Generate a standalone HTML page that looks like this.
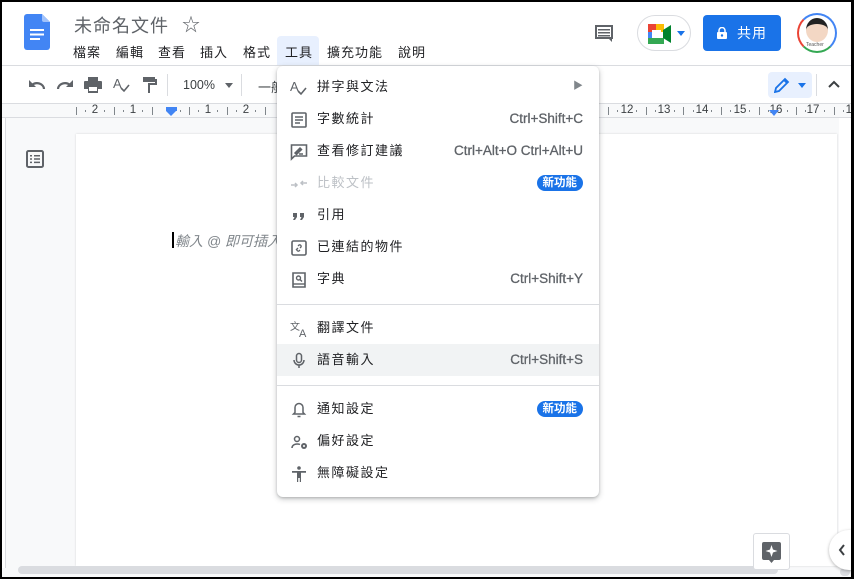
<!DOCTYPE html>
<html><head><meta charset="utf-8"><style>
*{margin:0;padding:0;box-sizing:border-box}
body{width:854px;height:579px;overflow:hidden;background:#fff;font-family:"Liberation Sans","Noto Sans CJK TC",sans-serif;position:relative;color:#3c4043}
.a{position:absolute}
.menu{left:277px;top:66px;width:322px;height:431px;background:#fff;border-radius:6px;box-shadow:0 2px 6px rgba(60,64,67,.3),0 1px 2px rgba(60,64,67,.2)}
.it{position:absolute;left:0;width:322px;height:32px;font-size:13px;line-height:32px;color:#202124}
.it .t{position:absolute;left:40px;letter-spacing:1.5px}
.it .k{position:absolute;right:16px;color:#5f6368;font-size:13.5px;-webkit-text-stroke:.3px #5f6368}
.it svg{position:absolute;left:13px;top:8px}
.badge{position:absolute;right:16px;top:8px;height:16px;line-height:16px;padding:0 6px;border-radius:8px;background:#1a73e8;color:#fff;font-size:11.5px;font-weight:bold}
.sep{position:absolute;left:0;width:322px;height:1px;background:#dadce0}
.mb span{position:absolute;top:42px;font-size:13px;color:#202124;letter-spacing:1px}
.rn{position:absolute;top:104px;font-size:11.5px;color:#3c4043;transform:translateX(-50%)}
.tk{position:absolute;top:107px;width:1px;height:8px;background:#80868b}
.dt{position:absolute;top:110px;width:1px;height:2px;background:#80868b}
</style></head><body>
<svg class="a" style="left:24px;top:14px" width="26" height="36" viewBox="0 0 26 36"><path d="M0 3a3 3 0 0 1 3-3h15l8 8v25a3 3 0 0 1-3 3H3a3 3 0 0 1-3-3z" fill="#4285f4"/><path d="M18 0l8 8h-6a2 2 0 0 1-2-2z" fill="#a1c2fa"/><rect x="6" y="15" width="14" height="2" fill="#fff"/><rect x="6" y="19.5" width="14" height="2" fill="#fff"/><rect x="6" y="24" width="10" height="2" fill="#fff"/></svg>
<div class="a" style="left:74px;top:12px;font-size:18px;color:#5f6368;letter-spacing:1px">未命名文件</div>
<div class="a" style="left:182px;top:11px;font-size:18px;color:#5f6368">☆</div>
<div class="mb"><span style="left:73px">檔案</span><span style="left:116px">編輯</span><span style="left:158px">查看</span><span style="left:200px">插入</span><span style="left:243px">格式</span><span style="left:285px">工具</span><span style="left:327px">擴充功能</span><span style="left:398px">說明</span></div>
<div class="a" style="left:277px;top:36px;width:42px;height:29px;background:#e8f0fe;border-radius:4px 4px 0 0;z-index:-1"></div>
<svg class="a" style="left:594px;top:24px" width="20" height="20" viewBox="0 0 20 20"><path d="M1 1h18v14h-1v3l-3-3H1z" fill="#5f6368"/><path d="M3 3h14v10H3z" fill="#fff"/><path d="M4 5h12v1.5H4zM4 8h12v1.5H4zM4 11h12v1.5H4z" fill="#5f6368"/></svg>
<div class="a" style="left:637px;top:15px;width:54px;height:36px;border:1px solid #dadce0;border-radius:18px"></div>
<svg class="a" style="left:648px;top:24px" width="24" height="20" viewBox="0 0 24 20"><rect x="0" y="0" width="8" height="8" fill="#ea4335"/><rect x="8" y="0" width="8" height="8" fill="#fbbc04"/><rect x="0" y="8" width="4" height="8" fill="#4285f4"/><rect x="0" y="14" width="16" height="6" fill="#34a853"/><rect x="4" y="6" width="9" height="8" fill="#fff"/><path d="M15 6l8-5v18l-8-5z" fill="#00832d"/></svg>
<div class="a" style="left:677px;top:31px;border:4px solid transparent;border-top:5px solid #1a73e8"></div>
<div class="a" style="left:703px;top:15px;width:78px;height:36px;background:#1a73e8;border-radius:4px;color:#fff;font-size:14px;line-height:36px"><svg style="position:absolute;left:14px;top:12px" width="10" height="12" viewBox="0 0 10 12"><path d="M2 5V3.5a3 3 0 0 1 6 0V5" fill="none" stroke="#fff" stroke-width="1.5"/><rect x="0" y="5" width="10" height="7" rx="1" fill="#fff"/><circle cx="5" cy="8.5" r="1.2" fill="#1a73e8"/></svg><span style="position:absolute;left:34px;letter-spacing:1px">共用</span></div>
<div class="a" style="left:797px;top:13px;width:40px;height:40px;border-radius:50%;border:2px solid #4285f4;border-left-color:#ea4335;border-bottom-color:#34a853;background:#fff"></div>
<div class="a" style="left:806px;top:18px;width:22px;height:24px;border-radius:50%;background:#f3d7c4;border-top:6px solid #222"></div>
<div class="a" style="left:806px;top:42px;font-size:5px;color:#555">Teacher</div>
<div class="a" style="left:0;top:65px;width:854px;height:1px;background:#dadce0"></div>
<!-- toolbar -->
<svg class="a" style="left:28px;top:78px" width="18" height="12" viewBox="0 0 18 12"><path d="M16 11a7 6 0 0 0-12-4" fill="none" stroke="#5f6368" stroke-width="2.2"/><path d="M1 2v7h7z" fill="#5f6368"/></svg>
<svg class="a" style="left:56px;top:78px" width="18" height="12" viewBox="0 0 18 12"><path d="M2 11a7 6 0 0 1 12-4" fill="none" stroke="#5f6368" stroke-width="2.2"/><path d="M17 2v7h-7z" fill="#5f6368"/></svg>
<svg class="a" style="left:84px;top:77px" width="18" height="16" viewBox="0 0 18 16"><path d="M4 0h10v4H4zM1 4h16a1 1 0 0 1 1 1v7h-4v4H4v-4H0V5a1 1 0 0 1 1-1z" fill="#5f6368"/><rect x="5" y="10" width="8" height="4" fill="#fff"/></svg>
<svg class="a" style="left:113px;top:76px" width="20" height="18" viewBox="0 0 20 18"><text x="0" y="12" font-size="13" fill="#5f6368" font-family="Liberation Sans">A</text><path d="M8 12l3 3 5-6" fill="none" stroke="#5f6368" stroke-width="1.6"/></svg>
<svg class="a" style="left:143px;top:77px" width="14" height="16" viewBox="0 0 14 16"><path d="M0 0h12v5H0zM12 2h2v6H7v8H5V6h7z" fill="#5f6368"/></svg>
<div class="a" style="left:167px;top:74px;width:1px;height:22px;background:#dadce0"></div>
<div class="a" style="left:183px;top:78px;font-size:12.5px;color:#3c4043">100%</div>
<div class="a" style="left:225px;top:83px;border:4px solid transparent;border-top:5px solid #5f6368"></div>
<div class="a" style="left:241px;top:74px;width:1px;height:22px;background:#dadce0"></div>
<div class="a" style="left:258px;top:77px;font-size:13px;color:#3c4043">一般</div>
<div class="a" style="left:768px;top:72px;width:44px;height:26px;background:#e8f0fe;border-radius:4px"></div>
<svg class="a" style="left:774px;top:77px" width="16" height="16" viewBox="0 0 16 16"><path d="M1 15l1-4 9-9 3 3-9 9zM10 3l3 3" fill="none" stroke="#1a73e8" stroke-width="1.8"/></svg>
<div class="a" style="left:798px;top:83px;border:4px solid transparent;border-top:5px solid #1a73e8"></div>
<div class="a" style="left:816px;top:74px;width:1px;height:22px;background:#dadce0"></div>
<svg class="a" style="left:828px;top:80px" width="12" height="8" viewBox="0 0 12 8"><path d="M1 7l5-5 5 5" fill="none" stroke="#3c4043" stroke-width="2"/></svg>
<!-- ruler -->
<div class="a" style="left:0;top:103px;width:854px;height:15px;background:#f8f9fa;border-top:1px solid #dadce0;border-bottom:1px solid #dadce0"></div>
<span class="rn" style="left:95px">2</span><span class="rn" style="left:133px">1</span><span class="rn" style="left:208px">1</span><span class="rn" style="left:246px">2</span>
<span class="tk" style="left:76px"></span><span class="tk" style="left:114px"></span><span class="tk" style="left:152px"></span><span class="tk" style="left:189px"></span><span class="tk" style="left:227px"></span><span class="tk" style="left:265px"></span>
<span class="dt" style="left:85px"></span><span class="dt" style="left:104px"></span><span class="dt" style="left:123px"></span><span class="dt" style="left:142px"></span><span class="dt" style="left:180px"></span><span class="dt" style="left:198px"></span><span class="dt" style="left:217px"></span><span class="dt" style="left:236px"></span><span class="dt" style="left:255px"></span>
<span class="rn" style="left:627px">12</span><span class="rn" style="left:664px">13</span><span class="rn" style="left:702px">14</span><span class="rn" style="left:740px">15</span><span class="rn" style="left:776px">16</span><span class="rn" style="left:813px">17</span><span class="rn" style="left:852px">18</span>
<span class="tk" style="left:608px"></span><span class="tk" style="left:646px"></span><span class="tk" style="left:683px"></span><span class="tk" style="left:721px"></span><span class="tk" style="left:759px"></span><span class="tk" style="left:796px"></span><span class="tk" style="left:834px"></span>
<span class="dt" style="left:617px"></span><span class="dt" style="left:636px"></span><span class="dt" style="left:655px"></span><span class="dt" style="left:674px"></span><span class="dt" style="left:693px"></span><span class="dt" style="left:711px"></span><span class="dt" style="left:730px"></span><span class="dt" style="left:749px"></span><span class="dt" style="left:768px"></span><span class="dt" style="left:787px"></span><span class="dt" style="left:805px"></span><span class="dt" style="left:824px"></span><span class="dt" style="left:843px"></span>
<div class="a" style="left:166px;top:107px;width:11px;height:4px;background:#4285f4"></div>
<div class="a" style="left:166px;top:111px;border:5.5px solid transparent;border-top:5px solid #4285f4;border-bottom:0"></div>
<div class="a" style="left:769px;top:110px;border:5px solid transparent;border-top:6px solid #4285f4;border-bottom:0"></div>
<!-- doc area -->
<div class="a" style="left:0;top:118px;width:854px;height:461px;background:#f8f9fa"></div>
<div class="a" style="left:0;top:118px;width:6px;height:450px;background:#fff;border-right:1px solid #dadce0"></div>
<div class="a" style="left:76px;top:134px;width:761px;height:432px;background:#fff;box-shadow:0 0 2px rgba(0,0,0,.15)"></div>
<svg class="a" style="left:26px;top:150px" width="18" height="18" viewBox="0 0 18 18"><rect x="1" y="1" width="16" height="16" rx="1.5" fill="none" stroke="#5f6368" stroke-width="2"/><path d="M4 5h2v1.5H4zM8 5h6v1.5H8zM4 8.3h2v1.5H4zM8 8.3h6v1.5H8zM4 11.6h2v1.5H4zM8 11.6h6v1.5H8z" fill="#5f6368"/></svg>
<div class="a" style="left:172px;top:232px;width:2px;height:16px;background:#000"></div>
<div class="a" style="left:175px;top:231px;font-size:14px;color:#80868b;font-style:italic">輸入 @ 即可插入</div>
<div class="a" style="left:839px;top:118px;width:13px;height:448px;background:#fff"></div>
<div class="a" style="left:840px;top:568px;width:10px;height:8px;background:#dadce0;border-radius:4px"></div>
<div class="a" style="left:18px;top:566px;width:760px;height:8px;background:#dadce0;border-radius:4px"></div>
<div class="a" style="left:753px;top:533px;width:37px;height:37px;background:#fff;border:1px solid #dadce0;border-radius:3px"></div>
<svg class="a" style="left:762px;top:542px" width="19" height="21" viewBox="0 0 19 21"><path d="M0 2a2 2 0 0 1 2-2h15a2 2 0 0 1 2 2v14a2 2 0 0 1-2 2h-5l-2.5 3L7 18H2a2 2 0 0 1-2-2z" fill="#5f6368"/><path d="M9.5 3l1.5 4.5 4.5 1.5-4.5 1.5-1.5 4.5-1.5-4.5L3.5 9 8 7.5z" fill="#fff"/></svg>
<div class="a" style="left:829px;top:530px;width:44px;height:40px;background:#fff;border-radius:20px;box-shadow:0 1px 3px rgba(0,0,0,.3)"></div>
<svg class="a" style="left:838px;top:544px" width="8" height="12" viewBox="0 0 8 12"><path d="M6 1L2 6l4 5" fill="none" stroke="#3c4043" stroke-width="2"/></svg>
<!-- menu -->
<div class="a menu">
 <div class="it" style="top:5px"><svg width="20" height="18" viewBox="0 0 20 18"><text x="0" y="12" font-size="13" fill="#5f6368" font-family="Liberation Sans">A</text><path d="M8 12l3 3 5-6" fill="none" stroke="#5f6368" stroke-width="1.6"/></svg><span class="t">拼字與文法</span><span class="k" style="font-size:10px;color:#80868b;-webkit-text-stroke:0">▶</span></div>
 <div class="it" style="top:37px"><svg width="18" height="18" viewBox="0 0 18 18"><rect x="2" y="2" width="14" height="14" rx="1" fill="none" stroke="#5f6368" stroke-width="1.6"/><path d="M5 6h8M5 9h8M5 12h5" stroke="#5f6368" stroke-width="1.5"/></svg><span class="t">字數統計</span><span class="k">Ctrl+Shift+C</span></div>
 <div class="it" style="top:69px"><svg width="18" height="18" viewBox="0 0 18 18"><path d="M1.5 2h15v11h-12l-3 3z" fill="none" stroke="#5f6368" stroke-width="1.6"/><path d="M5 10l5-5 1.5 1.5-5 5zM9 11h4" stroke="#5f6368" stroke-width="1.5" fill="#5f6368"/></svg><span class="t">查看修訂建議</span><span class="k">Ctrl+Alt+O Ctrl+Alt+U</span></div>
 <div class="it" style="top:101px;color:#bdc1c6"><svg width="18" height="18" viewBox="0 0 18 18"><path d="M1 10h6M5 8l2 2-2 2M17 8h-6M13 6l-2 2 2 2" fill="none" stroke="#bdc1c6" stroke-width="1.5"/></svg><span class="t">比較文件</span><span class="badge">新功能</span></div>
 <div class="it" style="top:133px"><svg width="18" height="18" viewBox="0 0 18 18"><path d="M3 6h4v4l-2 3H3l1.5-3H3zM10 6h4v4l-2 3h-2l1.5-3H10z" fill="#5f6368"/></svg><span class="t">引用</span></div>
 <div class="it" style="top:165px"><svg width="18" height="18" viewBox="0 0 18 18"><rect x="2" y="2" width="14" height="14" rx="1.5" fill="none" stroke="#5f6368" stroke-width="1.6"/><path d="M6 11l2-2M8 7l1-1a1.5 1.5 0 0 1 2 2l-1 1M10 11l-1 1a1.5 1.5 0 0 1-2-2l1-1" fill="none" stroke="#5f6368" stroke-width="1.3"/></svg><span class="t">已連結的物件</span></div>
 <div class="it" style="top:197px"><svg width="18" height="18" viewBox="0 0 18 18"><path d="M3 2h12v14H3z" fill="none" stroke="#5f6368" stroke-width="1.6"/><path d="M3 13h12" stroke="#5f6368" stroke-width="1.4"/><circle cx="8.5" cy="7" r="2" fill="none" stroke="#5f6368" stroke-width="1.4"/><path d="M10 8.5l2 2" stroke="#5f6368" stroke-width="1.4"/></svg><span class="t">字典</span><span class="k">Ctrl+Shift+Y</span></div>
 <div class="sep" style="top:238px"></div>
 <div class="it" style="top:246px"><svg width="20" height="18" viewBox="0 0 20 18"><text x="0" y="10" font-size="10" fill="#5f6368" font-family="Noto Sans CJK TC">文</text><text x="9" y="17" font-size="11" fill="#5f6368" font-family="Liberation Sans">A</text></svg><span class="t">翻譯文件</span></div>
 <div class="it" style="top:278px;background:#f1f3f4"><svg width="18" height="18" viewBox="0 0 18 18"><rect x="6.5" y="1.5" width="5" height="9" rx="2.5" fill="none" stroke="#5f6368" stroke-width="1.5"/><path d="M4 8a5 5 0 0 0 10 0M9 13v3" fill="none" stroke="#5f6368" stroke-width="1.5"/></svg><span class="t">語音輸入</span><span class="k">Ctrl+Shift+S</span></div>
 <div class="sep" style="top:319px"></div>
 <div class="it" style="top:327px"><svg width="18" height="18" viewBox="0 0 18 18"><path d="M9 2.5a4 4 0 0 0-4 4v5l-1.5 1.5h11L13 11.5v-5a4 4 0 0 0-4-4zM7.5 15.5h3" fill="none" stroke="#5f6368" stroke-width="1.5"/></svg><span class="t">通知設定</span><span class="badge">新功能</span></div>
 <div class="it" style="top:359px"><svg width="20" height="18" viewBox="0 0 20 18"><circle cx="7" cy="6" r="2.5" fill="none" stroke="#5f6368" stroke-width="1.5"/><path d="M2 15c0-3 3-4 5-4s3 .5 3 .5" fill="none" stroke="#5f6368" stroke-width="1.5"/><circle cx="14" cy="13" r="3" fill="#5f6368"/><circle cx="14" cy="13" r="1" fill="#fff"/></svg><span class="t">偏好設定</span></div>
 <div class="it" style="top:391px"><svg width="18" height="18" viewBox="0 0 18 18"><circle cx="9" cy="3" r="1.8" fill="#5f6368"/><path d="M2 6h14v1.8h-5V17H9.8v-4H8.2v4H7V7.8H2z" fill="#5f6368"/></svg><span class="t">無障礙設定</span></div>
</div>
<div class="a" style="left:0;top:0;width:854px;height:579px;border:2px solid #000;border-right-width:3px"></div>
</body></html>
